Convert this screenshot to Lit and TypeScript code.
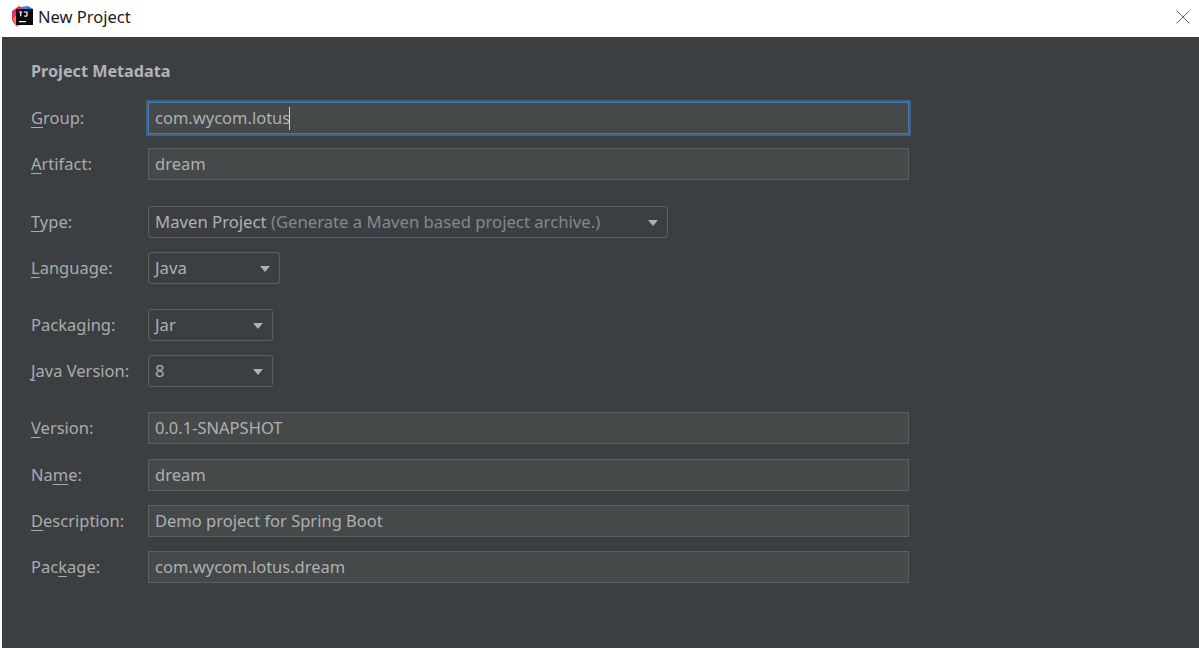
import { LitElement, html, css, nothing } from "lit";
import { customElement } from "lit/decorators.js";

type Row = { label: string; u: number; kind: "input" | "select"; value: string; hint?: string; width?: number; focus?: boolean; after?: boolean };

const groups: { gap: number; rows: Row[] }[] = [
  { gap: 0, rows: [
    { label: "Group:", u: 0, kind: "input", value: "com.wycom.lotus", focus: true },
    { label: "Artifact:", u: 0, kind: "input", value: "dream" },
  ]},
  { gap: 26, rows: [
    { label: "Type:", u: 0, kind: "select", value: "Maven Project", hint: " (Generate a Maven based project archive.)", width: 520 },
    { label: "Language:", u: 0, kind: "select", value: "Java", width: 132 },
  ]},
  { gap: 25, rows: [
    { label: "Packaging:", u: 5, kind: "select", value: "Jar", width: 125 },
    { label: "Java Version:", u: 0, kind: "select", value: "8", width: 125 },
  ]},
  { gap: 25, rows: [
    { label: "Version:", u: 0, kind: "input", value: "0.0.1-SNAPSHOT", after: true },
    { label: "Name:", u: 2, kind: "input", value: "dream" },
    { label: "Description:", u: 0, kind: "input", value: "Demo project for Spring Boot" },
    { label: "Package:", u: 3, kind: "input", value: "com.wycom.lotus.dream" },
  ]},
];

@customElement("app-root")
export class AppRoot extends LitElement {
  static styles = css`
    :host { display: block; width: 1199px; height: 648px; background: #fff; overflow: hidden;
      font-family: "Noto Sans", "Open Sans", sans-serif; }
    .title { height: 37px; display: flex; align-items: center; background: #fff; color: #1c1c1c; font-size: 16.5px; padding: 0 9px 4px 12px; box-sizing: border-box; }
    .logo { width: 21px; height: 21px; margin-right: 5px; flex: none; }
    .title .name { flex: 1; }
    .close { width: 14px; height: 14px; flex: none; }
    .body { margin-left: 2px; height: 611px; box-sizing: border-box; background: #3c3f41; padding: 24px 0 0 29px; color: #a9acae; font-size: 16.5px; }
    .heading { font-weight: 700; font-size: 16.2px; line-height: 20px; height: 41px; color: #b2b4b5; }
    .group { display: flex; flex-direction: column; gap: 14px; }
    .row { display: flex; align-items: center; height: 32px; }
    .row.after { margin-bottom: 1px; }
    .label { width: 117px; flex: none; padding-bottom: 1px; box-sizing: border-box; }
    .label u { text-underline-offset: 3px; }
    .field { box-sizing: border-box; height: 32px; width: 761px; display: flex; align-items: center; padding: 0 6px 1px; color: #aeb0b2; }
    .input { background: #45494a; border: 1px solid #5b5f60; }
    .input.focus { border-color: #4a78a8; box-shadow: 0 0 0 2px #3f6388; }
    .select { background: #3c3f41; border: 1px solid #5b5f60; border-radius: 3px; justify-content: space-between; font-size: 16.7px; }
    .hint { color: #85888a; }
    .caret { width: 0; height: 0; border-left: 5.5px solid transparent; border-right: 5.5px solid transparent; border-top: 6px solid #afb1b3; margin: 2px 3px 0 0; flex: none; }
    .cursor { display: inline-block; width: 1px; height: 23px; background: #d0d0d0; margin-left: -1px; vertical-align: -6px; }
  `;

  private label(r: Row) {
    const c = r.label;
    return html`${c.slice(0, r.u)}<u>${c[r.u]}</u>${c.slice(r.u + 1)}`;
  }

  private field(r: Row) {
    if (r.kind === "input") {
      return html`<div class="field input ${r.focus ? "focus" : ""}">
        <span>${r.value}${r.focus ? html`<span class="cursor"></span>` : nothing}</span>
      </div>`;
    }
    return html`<div class="field select" style="width:${r.width}px">
      <span>${r.value}${r.hint ? html`<span class="hint">${r.hint}</span>` : nothing}</span>
      <span class="caret"></span>
    </div>`;
  }

  render() {
    return html`
      <div class="title">
        <svg class="logo" viewBox="0 0 21 21">
          <path d="M0 5 L7 0 L13 3 L9 14 L3 19 L0 14 Z" fill="#ef2a6e"/>
          <path d="M9 1 L16 0 L21 3 L21 10 L12 8 Z" fill="#2b7fe6"/>
          <path d="M1 12 L5 9 L8 19 L4 21 Z" fill="#f68a1f"/>
          <rect x="4" y="3" width="17" height="16" fill="#0b0b0f"/>
          <path d="M7 5.500h3.400v1h-1.100v3.800h-1.200V6.500H7z M12 5.500h3.600v3.800c0 1.100-.9 1.500-1.800 1.500-.8 0-1.400-.3-1.800-.9l.9-.6c.2.300.5.400.8.400.4 0 .7-.2.700-.6V6.500H12z" fill="#fff"/>
          <rect x="7" y="15" width="7" height="1.200" fill="#fff"/>
        </svg>
        <span class="name">New Project</span>
        <svg class="close" viewBox="0 0 14 14"><path d="M.5.500 13.500 13.500M13.500.500.500 13.500" stroke="#6a6a6a" stroke-width="1" fill="none"/></svg>
      </div>
      <div class="body">
        <div class="heading">Project Metadata</div>
        ${groups.map((g) => html`
          <div class="group" style="margin-top:${g.gap}px">
            ${g.rows.map((r) => html`<div class="row ${r.after ? "after" : ""}"><div class="label">${this.label(r)}</div>${this.field(r)}</div>`)}
          </div>`)}
      </div>
    `;
  }
}
